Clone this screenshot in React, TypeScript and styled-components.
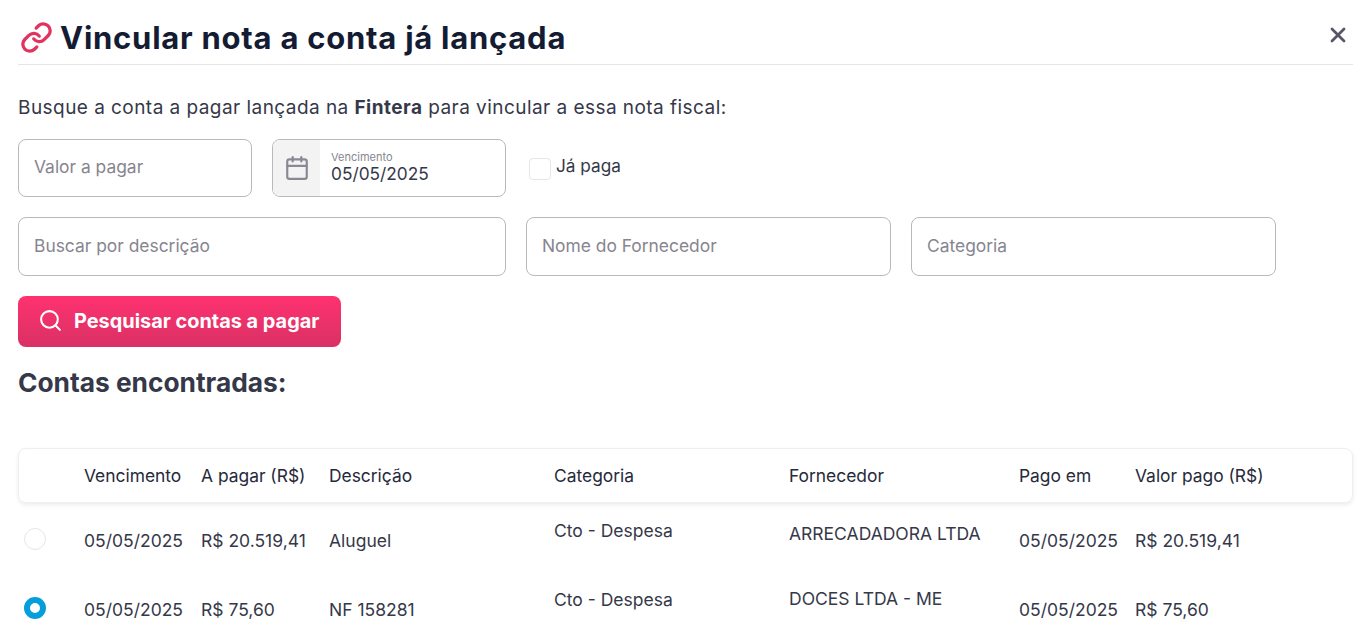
import { Calendar, Link, Search, X } from "lucide-react"
import styled, { createGlobalStyle } from "styled-components"

const GlobalStyle = createGlobalStyle`
  html, body {
    margin: 0;
    padding: 0;
    height: 636px;
    overflow: hidden;
    background: #fff;
    font-family: Inter, "Liberation Sans", sans-serif;
    color: #353849;
  }
  * { box-sizing: border-box; }
`

const Modal = styled.div`
  width: 1372px;
  height: 636px;
  overflow: hidden;
  padding: 14px 19px 0 18px;
`
const Header = styled.header`
  height: 51px;
  display: flex;
  align-items: center;
  justify-content: space-between;
  border-bottom: 1px solid #e6e6e8;
  padding-bottom: 3px;
`
const TitleWrapper = styled.div`
  display: flex;
  align-items: center;
  gap: 7px;
  padding-left: 2px;
  color: #e3325f;
`
const Title = styled.h1`
  margin: 0;
  font-size: 31px;
  letter-spacing: 0.75px;
  line-height: 48px;
  font-weight: 700;
  color: #141c33;
  white-space: nowrap;
`
const CloseButton = styled.button`
  border: 0;
  background: none;
  padding: 0;
  margin: 0 3px 6px 0;
  display: flex;
  color: #565668;
`
const Intro = styled.p`
  margin: 31px 0 19px;
  font-size: 19px;
  letter-spacing: 0.45px;
  line-height: 24px;
  color: #353849;

  strong {
    font-weight: 700;
  }
`
const Row = styled.div`
  display: flex;
  align-items: center;
  gap: 20px;
  margin-bottom: 20px;
`
const Field = styled.div<{ $width: number; $height?: number }>`
  width: ${props => props.$width}px;
  height: ${props => props.$height ?? 59}px;
  border: 1px solid #b9b8c1;
  border-radius: 8px;
  display: flex;
  align-items: center;
  padding: 0 0 2px 15px;
  font-size: 17.4px;
  color: #87858f;
  background: #fff;
`
const ValueField = styled(Field)`
  padding-bottom: 3px;
`
const DateField = styled(Field)`
  padding: 0;
  overflow: hidden;
`
const DateIcon = styled.div`
  width: 47px;
  height: 100%;
  background: #f3f3f4;
  color: #8a8894;
  display: flex;
  align-items: center;
  justify-content: center;
`
const DateValue = styled.div`
  margin: 0 0 1px 11px;
  display: flex;
  flex-direction: column;
`
const DateLabel = styled.span`
  font-size: 11px;
  line-height: 12px;
  color: #87858f;
`
const DateText = styled.span`
  font-size: 17.3px;
  line-height: 21px;
  color: #353849;
`
const CheckLabel = styled.label`
  display: flex;
  align-items: center;
  gap: 5px;
  font-size: 17.2px;
  color: #353849;
  margin: 0 0 6px 3px;
`
const CheckBox = styled.span`
  width: 22px;
  height: 22px;
  margin-top: 8px;
  border: 1px solid #e6e6e8;
  border-radius: 4px;
`
const SearchButton = styled.button`
  width: 323px;
  height: 51px;
  border: 0;
  border-radius: 8px;
  background: linear-gradient(#ff3270, #d93165);
  color: #fff;
  display: flex;
  align-items: center;
  gap: 11px;
  padding: 0 0 2px 20px;
  font-family: inherit;
  font-size: 19.9px;
  font-weight: 700;
`
const SectionTitle = styled.h2`
  margin: 20px 0 49px;
  font-size: 26.3px;
  line-height: 32px;
  font-weight: 700;
  color: #353849;
`

const TableHead = styled.div`
  height: 55px;
  display: grid;
  grid-template-columns: 65px 117px 128px 225px 235px 230px 116px 1fr;
  align-items: center;
  border: 1px solid #efefef;
  border-radius: 8px;
  box-shadow: 0 2px 4px rgba(0, 0, 0, 0.08);
  font-size: 17.4px;
  color: #262a3b;
`
const TableRow = styled.div`
  height: 69px;
  display: grid;
  grid-template-columns: 66px 117px 128px 225px 235px 230px 116px 1fr;
  align-items: center;
  font-size: 17.5px;
  color: #353849;
`
const Cell = styled.div<{ $shift?: number }>`
  white-space: nowrap;
  transform: translateY(${props => props.$shift ?? 3}px);
`
const HeadCell = styled.div`
  white-space: nowrap;
`
const Radio = styled.span<{ $checked?: boolean }>`
  display: block;
  width: 22px;
  height: 22px;
  margin: 2px 0 0 6px;
  border-radius: 50%;
  border: ${props => (props.$checked ? "6px solid #049fdb" : "1px solid #e6e6e8")};
`

const heads = ["Vencimento", "A pagar (R$)", "Descrição", "Categoria", "Fornecedor", "Pago em", "Valor pago (R$)"]

const rows = [
  { value: "R$ 20.519,41", desc: "Aluguel", supplier: "ARRECADADORA LTDA", supplierShift: -4, checked: false },
  { value: "R$ 75,60", desc: "NF 158281", supplier: "DOCES LTDA - ME", supplierShift: -8, checked: true },
]

export default function App() {
  return (
    <>
      <GlobalStyle />
      <Modal>
        <Header>
          <TitleWrapper>
            <Link size={33} strokeWidth={2.4} />
            <Title>Vincular nota a conta já lançada</Title>
          </TitleWrapper>
          <CloseButton type="button"><X size={24} strokeWidth={2.8} /></CloseButton>
        </Header>

        <Intro>Busque a conta a pagar lançada na <strong>Fintera</strong> para vincular a essa nota fiscal:</Intro>

        <Row>
          <ValueField $width={234} $height={58}>Valor a pagar</ValueField>
          <DateField $width={234} $height={58}>
            <DateIcon><Calendar size={26} strokeWidth={2} /></DateIcon>
            <DateValue>
              <DateLabel>Vencimento</DateLabel>
              <DateText>05/05/2025</DateText>
            </DateValue>
          </DateField>
          <CheckLabel><CheckBox />Já paga</CheckLabel>
        </Row>

        <Row>
          <Field $width={488}>Buscar por descrição</Field>
          <Field $width={365}>Nome do Fornecedor</Field>
          <Field $width={365}>Categoria</Field>
        </Row>

        <SearchButton type="button"><Search size={25} strokeWidth={2} />Pesquisar contas a pagar</SearchButton>

        <SectionTitle>Contas encontradas:</SectionTitle>

        <TableHead>
          <div />
          {heads.map(h => <HeadCell key={h}>{h}</HeadCell>)}
        </TableHead>

        {rows.map(r => (
          <TableRow key={r.desc}>
            <Radio $checked={r.checked} />
            <Cell>05/05/2025</Cell>
            <Cell>{r.value}</Cell>
            <Cell>{r.desc}</Cell>
            <Cell $shift={-7}>Cto - Despesa</Cell>
            <Cell $shift={r.supplierShift}>{r.supplier}</Cell>
            <Cell>05/05/2025</Cell>
            <Cell>{r.value}</Cell>
          </TableRow>
        ))}
      </Modal>
    </>
  )
}
